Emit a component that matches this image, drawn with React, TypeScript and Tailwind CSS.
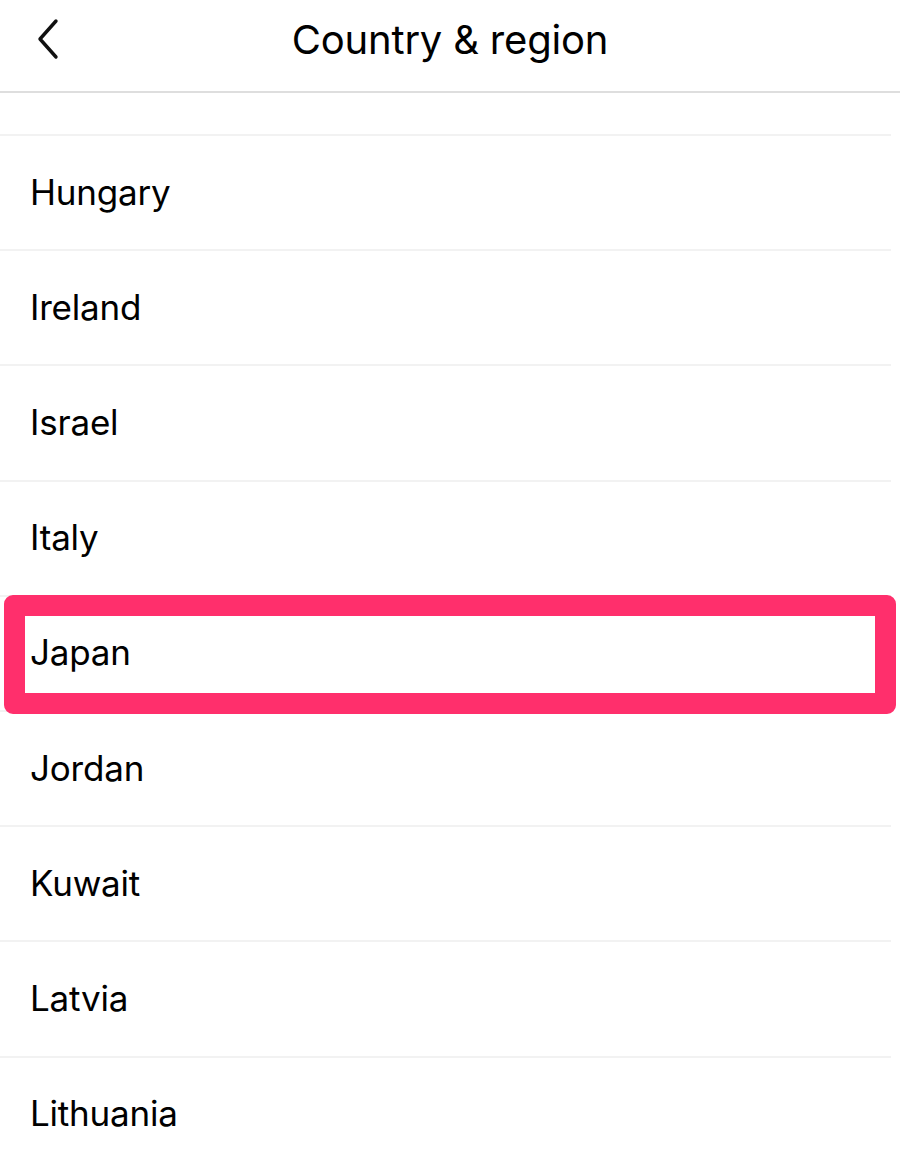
import React from "react";

const countries = ["Hungary", "Ireland", "Israel", "Italy", "Japan", "Jordan", "Kuwait", "Latvia", "Lithuania"];

export default function App() {
  return (
    <div className="w-[900px] h-[1164px] overflow-hidden bg-white text-black" style={{ fontFamily: "Inter, 'Noto Sans', sans-serif" }}>
      <div className="relative h-[93px] flex items-center justify-center border-b-2 border-[#dedede]">
        <div className="absolute left-[36px] top-[18px]">
          <svg width="26" height="42" viewBox="0 0 26 42" fill="none">
            <path d="M20 3 L4 21 L20 39" stroke="#111" strokeWidth="3.4" strokeLinecap="round" strokeLinejoin="round" />
          </svg>
        </div>
        <div className="text-[40px] leading-none -mt-[12px] tracking-[-0.2px]">Country &amp; region</div>
      </div>
      <div className="h-[43px] mr-[9px] border-b-2 border-[#f2f2f2]" />
      {countries.map((c) => (
        <div key={c} className="relative">
          <div className="h-[115.2px] mr-[9px] flex items-center pl-[30px] border-b-2 border-[#f2f2f2]">
            <span className="text-[35px] leading-none -mt-[1px] tracking-[-0.2px]">{c}</span>
          </div>
          {c === "Japan" && (
            <div className="absolute left-[4px] right-[4px] -top-[2px] h-[119px] border-[21px] border-[#ff2f6c] rounded-[9px]" />
          )}
        </div>
      ))}
    </div>
  );
}
